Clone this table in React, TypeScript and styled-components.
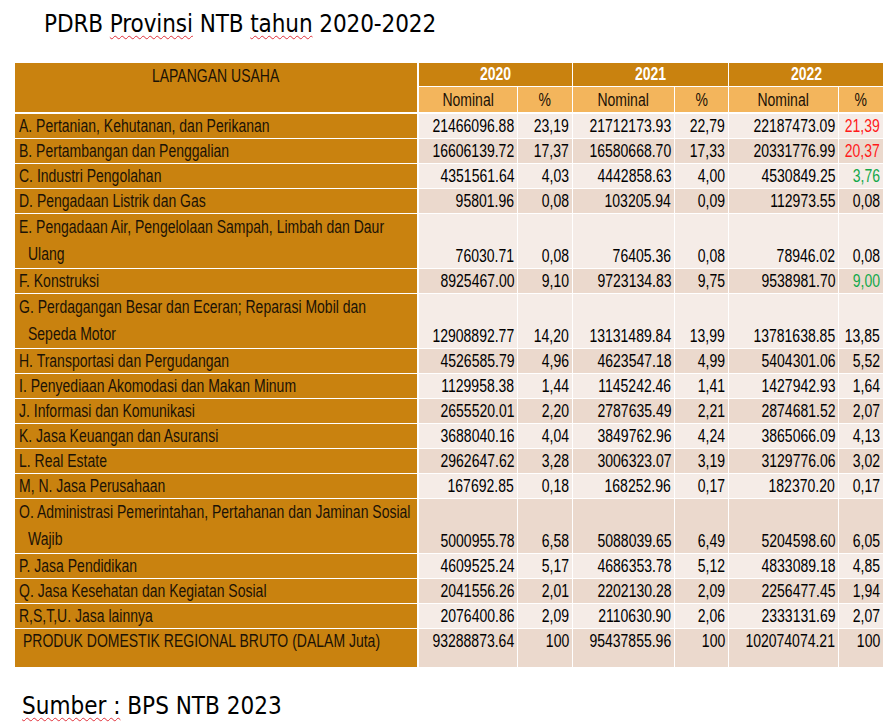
import { FC } from 'react';
import styled, { createGlobalStyle } from 'styled-components';

type Tone = 'red' | 'green';

interface Row {
	label: string[];
	values: string[];
	tone?: Tone;
	tall?: boolean;
	total?: boolean;
}

const rows: Row[] = [
	{ label: ['A. Pertanian, Kehutanan, dan Perikanan'], values: ['21466096.88', '23,19', '21712173.93', '22,79', '22187473.09', '21,39'], tone: 'red' },
	{ label: ['B. Pertambangan dan Penggalian'], values: ['16606139.72', '17,37', '16580668.70', '17,33', '20331776.99', '20,37'], tone: 'red' },
	{ label: ['C. Industri Pengolahan'], values: ['4351561.64', '4,03', '4442858.63', '4,00', '4530849.25', '3,76'], tone: 'green' },
	{ label: ['D. Pengadaan Listrik dan Gas'], values: ['95801.96', '0,08', '103205.94', '0,09', '112973.55', '0,08'] },
	{ label: ['E. Pengadaan Air, Pengelolaan Sampah, Limbah dan Daur', 'Ulang'], values: ['76030.71', '0,08', '76405.36', '0,08', '78946.02', '0,08'], tall: true },
	{ label: ['F. Konstruksi'], values: ['8925467.00', '9,10', '9723134.83', '9,75', '9538981.70', '9,00'], tone: 'green' },
	{ label: ['G. Perdagangan Besar dan Eceran; Reparasi Mobil dan', 'Sepeda Motor'], values: ['12908892.77', '14,20', '13131489.84', '13,99', '13781638.85', '13,85'], tall: true },
	{ label: ['H. Transportasi dan Pergudangan'], values: ['4526585.79', '4,96', '4623547.18', '4,99', '5404301.06', '5,52'] },
	{ label: ['I. Penyediaan Akomodasi dan Makan Minum'], values: ['1129958.38', '1,44', '1145242.46', '1,41', '1427942.93', '1,64'] },
	{ label: ['J. Informasi dan Komunikasi'], values: ['2655520.01', '2,20', '2787635.49', '2,21', '2874681.52', '2,07'] },
	{ label: ['K. Jasa Keuangan dan Asuransi'], values: ['3688040.16', '4,04', '3849762.96', '4,24', '3865066.09', '4,13'] },
	{ label: ['L. Real Estate'], values: ['2962647.62', '3,28', '3006323.07', '3,19', '3129776.06', '3,02'] },
	{ label: ['M, N. Jasa Perusahaan'], values: ['167692.85', '0,18', '168252.96', '0,17', '182370.20', '0,17'] },
	{ label: ['O. Administrasi Pemerintahan, Pertahanan dan Jaminan Sosial', 'Wajib'], values: ['5000955.78', '6,58', '5088039.65', '6,49', '5204598.60', '6,05'], tall: true },
	{ label: ['P. Jasa Pendidikan'], values: ['4609525.24', '5,17', '4686353.78', '5,12', '4833089.18', '4,85'] },
	{ label: ['Q. Jasa Kesehatan dan Kegiatan Sosial'], values: ['2041556.26', '2,01', '2202130.28', '2,09', '2256477.45', '1,94'] },
	{ label: ['R,S,T,U. Jasa lainnya'], values: ['2076400.86', '2,09', '2110630.90', '2,06', '2333131.69', '2,07'] },
	{ label: ['PRODUK DOMESTIK REGIONAL  BRUTO (DALAM Juta)'], values: ['93288873.64', '100', '95437855.96', '100', '102074074.21', '100'], total: true },
];

const years = ['2020', '2021', '2022'];
const colWidths = [403, 100, 55, 102, 54, 110, 45];

const App: FC = () => {
	return (
		<>
			<GlobalStyle />
			<Page>
				<Title>
					PDRB <Squiggle>Provinsi</Squiggle> NTB <Squiggle>tahun</Squiggle> 2020-2022
				</Title>
				<Table>
					<colgroup>
						{colWidths.map((w, i) => (
							<col key={i} style={{ width: w }} />
						))}
					</colgroup>
					<thead>
						<tr>
							<FieldHead rowSpan={2}>
								<Narrow $origin="center">LAPANGAN USAHA</Narrow>
							</FieldHead>
							{years.map((y) => (
								<YearHead key={y} colSpan={2}>
									<Narrow $origin="center">{y}</Narrow>
								</YearHead>
							))}
						</tr>
						<tr>
							{years.map((y) => [
								<SubHead key={y + 'n'}>
									<Narrow $origin="center">Nominal</Narrow>
								</SubHead>,
								<SubHead key={y + 'p'}>
									<Narrow $origin="center">%</Narrow>
								</SubHead>,
							])}
						</tr>
					</thead>
					<tbody>
						{rows.map((row, i) => (
							<tr key={i}>
								<LabelCell $tall={row.tall} $total={row.total}>
									{row.label.map((line, j) => (
										<LabelLine key={j} $indent={j > 0} $tall={row.tall}>
											<Narrow $origin="left">{line}</Narrow>
										</LabelLine>
									))}
								</LabelCell>
								{row.values.map((v, j) => (
									<ValueCell
										key={j}
										$shade={i % 2 === 1}
										$total={row.total}
										$tone={j === 5 ? row.tone : undefined}
									>
										<NumBox>
											<Narrow $origin="right">{v}</Narrow>
										</NumBox>
									</ValueCell>
								))}
							</tr>
						))}
					</tbody>
				</Table>
				<Source>
					<Squiggle>Sumber :</Squiggle> BPS NTB 2023
				</Source>
			</Page>
		</>
	);
};

const GlobalStyle = createGlobalStyle`
	body {
		margin: 0;
		background: #ffffff;
	}
`;

const Page = styled.div`
	width: 891px;
	height: 723px;
	padding-top: 9px;
	box-sizing: border-box;
	overflow: hidden;
	background: #ffffff;
`;

const Title = styled.div`
	margin-left: 44px;
	font-family: 'DejaVu Sans Condensed', 'DejaVu Sans', sans-serif;
	font-size: 24px;
	line-height: 30px;
	letter-spacing: -0.1px;
	color: #000000;
`;

const Squiggle = styled.span`
	text-decoration: underline wavy #e0303a;
	text-decoration-thickness: 1px;
	text-underline-offset: 3px;
`;

// Arial Narrow look: Liberation Sans squeezed horizontally
const Narrow = styled.span<{ $origin: 'left' | 'right' | 'center' }>`
	display: inline-block;
	white-space: nowrap;
	transform: scaleX(0.8);
	transform-origin: ${(p) => p.$origin} center;
`;

const Table = styled.table`
	margin: 23px 0 0 14px;
	width: 869px;
	table-layout: fixed;
	border-collapse: collapse;
	font-family: 'Liberation Sans', Arial, sans-serif;
	font-size: 17.5px;
	color: #000000;

	td,
	th {
		padding: 0;
		border: 1px solid #ffffff;
		white-space: nowrap;
	}
`;

const FieldHead = styled.th`
	background: #c9820f;
	color: #1b1206;
	font-weight: normal;
	vertical-align: top;
	text-align: center;
	line-height: 26px;
	height: 49px;
	border-right-width: 2px !important;
	border-bottom-width: 2px !important;
`;

const YearHead = styled.th`
	background: #c9820f;
	color: #ffffff;
	font-weight: bold;
	text-align: center;
	line-height: 23px;
	height: 23px;
`;

const SubHead = styled.th`
	background: #f3b55c;
	color: #1b1206;
	font-weight: normal;
	text-align: center;
	line-height: 24px;
	height: 24px;
	border-bottom-width: 2px !important;
`;

const LabelCell = styled.td<{ $tall?: boolean; $total?: boolean }>`
	background: #c9820f;
	color: #1b1206;
	vertical-align: top;
	padding-left: ${(p) => (p.$total ? 8 : 4)}px !important;
	height: ${(p) => (p.$tall ? 54 : p.$total ? 38 : 23)}px;
	border-right-width: 2px !important;
	overflow: hidden;
`;

const LabelLine = styled.div<{ $indent?: boolean; $tall?: boolean }>`
	line-height: ${(p) => (p.$tall ? 27 : 24)}px;
	padding-left: ${(p) => (p.$indent ? 9 : 0)}px;
`;

const toneColor = { red: '#ff1a1a', green: '#12a84a' };

const ValueCell = styled.td<{ $shade?: boolean; $total?: boolean; $tone?: Tone }>`
	background: ${(p) => (p.$shade ? '#ebd9cd' : '#f5ece7')};
	color: ${(p) => (p.$tone ? toneColor[p.$tone] : '#000000')};
	padding-right: 3px !important;
	line-height: 24px;
	vertical-align: ${(p) => (p.$total ? 'top' : 'bottom')};
	overflow: hidden;
`;

const NumBox = styled.div`
	display: flex;
	justify-content: flex-end;
`;

const Source = styled.div`
	margin: 23px 0 0 22px;
	font-family: 'DejaVu Sans Condensed', 'DejaVu Sans', sans-serif;
	font-size: 24px;
	line-height: 30px;
	color: #000000;
`;

export default App;
